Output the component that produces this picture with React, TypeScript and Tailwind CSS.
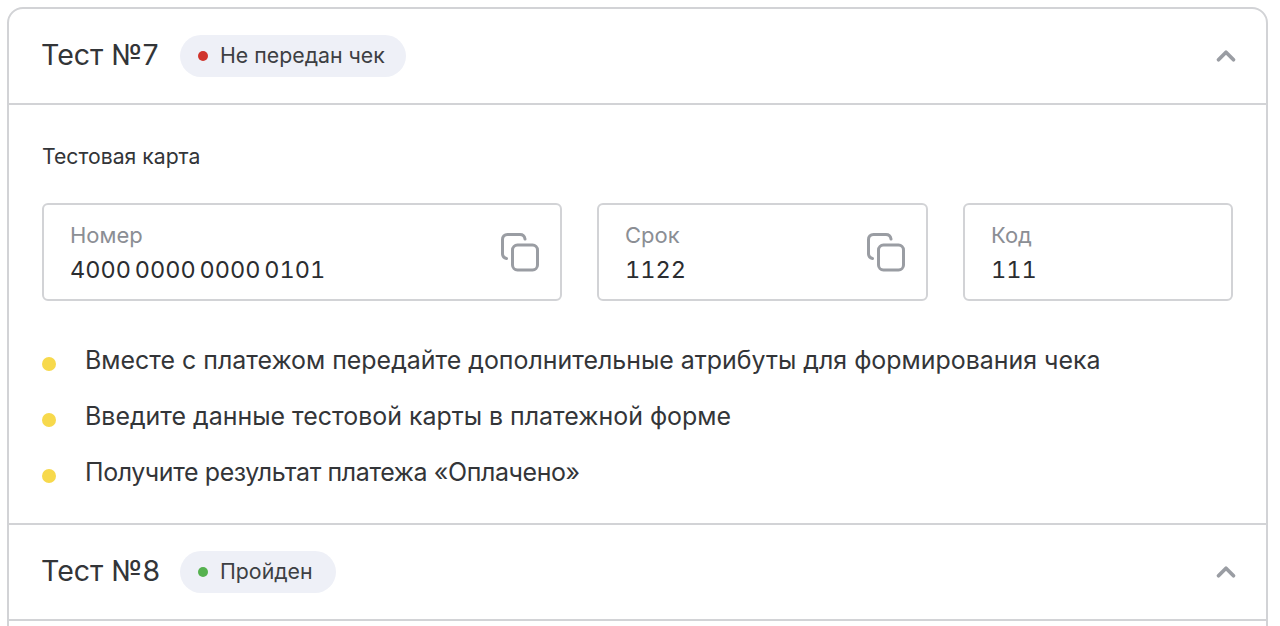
import { ChevronUp } from 'lucide-react';

const CopyIcon = () => (
  <svg width="40" height="40" viewBox="0 0 40 40" fill="none" className="mt-[2px] text-[#9a9da3]">
    <rect x="12.5" y="12" width="25" height="25" rx="5" stroke="currentColor" strokeWidth="3" />
    <path d="M6.5 25.5 C3.5 25 2.5 23 2.5 20.5 V6.5 C2.5 3.5 4.5 1.5 7.5 1.5 H20 C23 1.5 24.5 3 25 6" stroke="currentColor" strokeWidth="3" strokeLinecap="round" />
  </svg>
);

function StatusHeader({ title, status, dot, pillWidth }: { title: string; status: string; dot: string; pillWidth: string }) {
  return (
    <div className="flex h-[94px] items-center justify-between pl-[32px] pr-[25px]">
      <div className="flex items-center gap-[21px]">
        <span className="mb-[2px] w-[118px] whitespace-nowrap text-[28.5px] text-[#333538]">{title}</span>
        <span className={`flex h-[42px] items-center gap-[12px] rounded-full bg-[#eef0f7] pl-[18px] text-[21.3px] text-[#3d3f43] ${pillWidth}`}>
          <span className={`size-[10px] rounded-full ${dot}`} />
          {status}
        </span>
      </div>
      <ChevronUp className="size-[30px] text-[#9a9da3]" strokeWidth={3} />
    </div>
  );
}

function Field({ label, value, copy, className }: { label: string; value: string; copy?: boolean; className: string }) {
  return (
    <div className={`flex h-[98px] items-center justify-between rounded-[6px] border-2 border-[#d2d3d6] pl-[26px] pr-[20px] ${className}`}>
      <div className="mt-[2px] flex flex-col gap-[5px]">
        <span className="text-[22px] leading-[28px] text-[#8b8e94]">{label}</span>
        <span className="text-[23.5px] leading-[32px] text-[#2b2d30] tabular-nums [word-spacing:-2.5px]">{value}</span>
      </div>
      {copy && <CopyIcon />}
    </div>
  );
}

const STEPS = [
  { text: 'Вместе с платежом передайте дополнительные атрибуты для формирования чека', tracking: '' },
  { text: 'Введите данные тестовой карты в платежной форме', tracking: '' },
  { text: 'Получите результат платежа «Оплачено»', tracking: 'tracking-[-0.38px]' },
];

export default function App() {
  return (
    <div className="h-[626px] overflow-hidden bg-white pl-[7px] pr-[12px] pt-[7px] font-['Inter',sans-serif]">
      <div className="rounded-t-[16px] border-2 border-[#d2d3d6]">
        <StatusHeader title="Тест №7" status="Не передан чек" dot="bg-[#d0342c]" pillWidth="w-[226px]" />
        <div className="h-[422px] border-y-2 border-[#d2d3d6] px-[33px] pt-[37px]">
          <div className="text-[21.2px] leading-[28px] text-[#333538]">Тестовая карта</div>
          <div className="mt-[33px] flex gap-[35px]">
            <Field label="Номер" value="4000 0000 0000 0101" copy className="w-[520px]" />
            <Field label="Срок" value="1122" copy className="w-[331px]" />
            <Field label="Код" value="111" className="flex-1" />
          </div>
          <ul className="mt-[43px] flex flex-col gap-[24px]">
            {STEPS.map((s) => (
              <li key={s.text} className={`flex items-center gap-[29px] text-[24.93px] leading-[32px] text-[#333538] ${s.tracking}`}>
                <span className="mt-[7px] size-[14px] shrink-0 rounded-full bg-[#f7d94c]" />
                {s.text}
              </li>
            ))}
          </ul>
        </div>
        <StatusHeader title="Тест №8" status="Пройден" dot="bg-[#55b14f]" pillWidth="w-[156px]" />
        <div className="h-[40px] border-t-2 border-[#d2d3d6]" />
      </div>
    </div>
  );
}
